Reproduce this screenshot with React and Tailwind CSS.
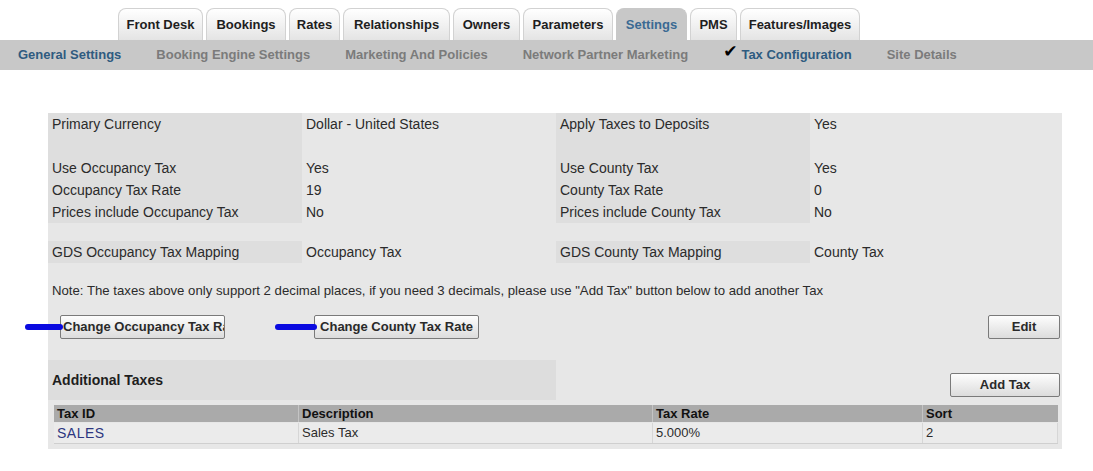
import React from 'react';

const tabs = [
  { label: 'Front Desk', w: 'w-[85px]' },
  { label: 'Bookings', w: 'w-[80px]' },
  { label: 'Rates', w: 'w-[51px]' },
  { label: 'Relationships', w: 'w-[107px]' },
  { label: 'Owners', w: 'w-[67px]' },
  { label: 'Parameters', w: 'w-[90px]' },
  { label: 'Settings', w: 'w-[71px]', active: true },
  { label: 'PMS', w: 'w-[47px]' },
  { label: 'Features/Images', w: 'w-[120px]' },
];

const subNav = [
  { label: 'General Settings', active: true },
  { label: 'Booking Engine Settings' },
  { label: 'Marketing And Policies' },
  { label: 'Network Partner Marketing' },
  { label: 'Tax Configuration', active: true, checked: true },
  { label: 'Site Details' },
];

// top block of the tax form, label / value pairs side by side
const topRows = [
  ['Primary Currency', 'Dollar - United States', 'Apply Taxes to Deposits', 'Yes'],
  ['', '', '', ''],
  ['Use Occupancy Tax', 'Yes', 'Use County Tax', 'Yes'],
  ['Occupancy Tax Rate', '19', 'County Tax Rate', '0'],
  ['Prices include Occupancy Tax', 'No', 'Prices include County Tax', 'No'],
];

function FormRow({ cells }) {
  return (
    <div className="flex h-[22px] items-center text-[14px] text-[#2b2b2b]">
      <div className="w-[254px] h-full flex items-center pl-1 bg-[#dedede]">{cells[0]}</div>
      <div className="w-[254px] h-full flex items-center pl-1">{cells[1]}</div>
      <div className="w-[254px] h-full flex items-center pl-1 bg-[#dedede]">{cells[2]}</div>
      <div className="w-[252px] h-full flex items-center pl-1">{cells[3]}</div>
    </div>
  );
}

function GreyButton({ children, className = '' }) {
  return (
    <button
      className={`h-[24px] border border-[#7a7a7a] rounded-[2px] bg-gradient-to-b from-[#fdfdfd] to-[#dcdcdc] text-[13px] font-bold text-[#2a2a2a] overflow-hidden whitespace-nowrap ${className}`}
    >
      {children}
    </button>
  );
}

export default function App() {
  return (
    <div className="w-[1093px] h-[471px] bg-white font-['Liberation_Sans',Arial,sans-serif] overflow-hidden">
      {/* main tabs */}
      <div className="flex gap-[3px] pl-[118px] pt-[8px]">
        {tabs.map((t) => (
          <div
            key={t.label}
            className={`${t.w} h-[32px] flex items-center justify-center rounded-t-[8px] border border-b-0 text-[13px] font-bold ${
              t.active
                ? 'bg-[#c8c8c8] border-[#c8c8c8] text-[#3b6a93]'
                : 'bg-gradient-to-b from-[#ffffff] to-[#e4e4e4] border-[#d2d2d2] text-[#1e1e1e]'
            }`}
          >
            {t.label}
          </div>
        ))}
      </div>

      {/* sub navigation */}
      <div className="h-[30px] bg-[#c8c8c8] flex items-center pl-[18px] gap-[35px] text-[13px] font-bold">
        {subNav.map((s) => (
          <div key={s.label} className="flex items-center">
            {s.checked && (
              <span className="text-black text-[17px] leading-none mr-[4px] mb-[8px] font-['DejaVu_Sans',sans-serif]">
                ✔
              </span>
            )}
            <span className={s.active ? 'text-[#2f5b80]' : 'text-[#7b7b7b]'}>{s.label}</span>
          </div>
        ))}
      </div>

      {/* tax configuration panel */}
      <div className="ml-[48px] mt-[43px] w-[1014px] bg-[#e7e7e7] pb-[5px]">
        {topRows.map((r, i) => (
          <FormRow key={i} cells={r} />
        ))}
        <div className="h-[18px]" />
        <FormRow cells={['GDS Occupancy Tax Mapping', 'Occupancy Tax', 'GDS County Tax Mapping', 'County Tax']} />
        <div className="h-[17px]" />
        <div className="h-[22px] flex items-center pl-1 text-[13.2px] text-[#2b2b2b]">
          Note: The taxes above only support 2 decimal places, if you need 3 decimals, please use "Add Tax" button below to add another Tax
        </div>

        <div className="relative flex items-center mt-[13px] h-[24px]">
          <div className="absolute left-[-23px] top-[9px] w-[38px] h-[6px] rounded-full bg-[#0a0ae0]" />
          <GreyButton className="ml-[12px] w-[165px] text-left pl-[2px]">Change Occupancy Tax Rate</GreyButton>
          <div className="absolute left-[227px] top-[9px] w-[42px] h-[6px] rounded-full bg-[#0a0ae0]" />
          <GreyButton className="ml-[89px] w-[165px]">Change County Tax Rate</GreyButton>
          <GreyButton className="ml-auto mr-[2px] w-[72px]">Edit</GreyButton>
        </div>

        <div className="flex items-start mt-[21px]">
          <div className="w-[508px] h-[40px] bg-[#dddddd] flex items-center pl-1 text-[14px] font-bold text-[#1e1e1e]">
            Additional Taxes
          </div>
          <GreyButton className="ml-auto mr-[2px] mt-[13px] w-[110px]">Add Tax</GreyButton>
        </div>

        <div className="mx-[6px] mt-[5px] w-[1004px]">
          <div className="flex h-[17px] bg-[#aaaaaa] text-[13px] font-bold text-[#111]">
            <div className="w-[244px] pl-[3px] flex items-center">Tax ID</div>
            <div className="w-[354px] pl-[3px] flex items-center border-l border-[#c4c4c4]">Description</div>
            <div className="w-[270px] pl-[3px] flex items-center border-l border-[#c4c4c4]">Tax Rate</div>
            <div className="flex-1 pl-[3px] flex items-center border-l border-[#c4c4c4]">Sort</div>
          </div>
          <div className="flex h-[21px] mt-[1px] bg-[#ebebeb] border-b border-[#cfcfcf] text-[13px] text-[#2b2b2b]">
            <div className="w-[244px] pl-[3px] flex items-center text-[14px] text-[#2d3680] tracking-[0.5px]">SALES</div>
            <div className="w-[354px] pl-[3px] flex items-center border-l border-[#d6d6d6]">Sales Tax</div>
            <div className="w-[270px] pl-[3px] flex items-center border-l border-[#d6d6d6]">5.000%</div>
            <div className="flex-1 pl-[3px] flex items-center border-l border-r border-[#d6d6d6]">2</div>
          </div>
        </div>
      </div>
    </div>
  );
}
